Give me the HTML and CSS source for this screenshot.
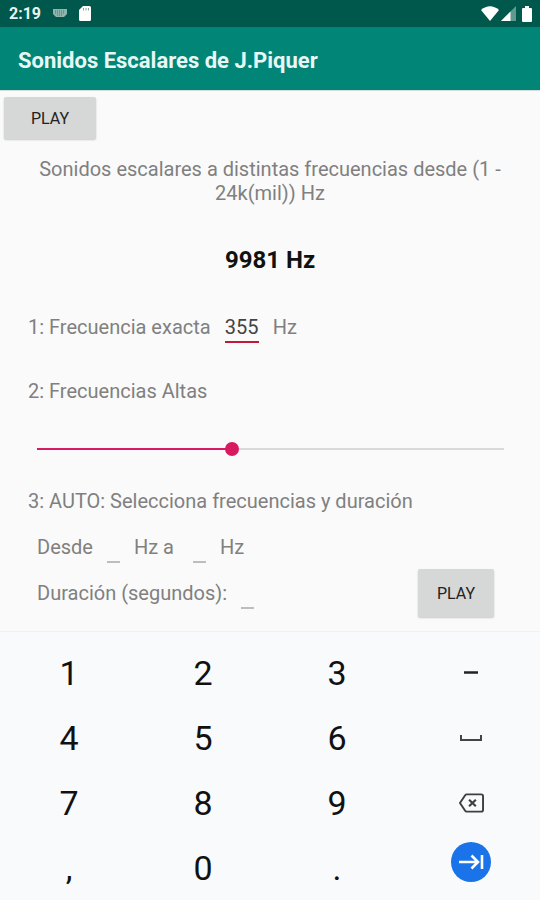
FILE: index.html
```html
<!DOCTYPE html>
<html lang="es">
<head>
    <meta charset="UTF-8">
    <meta name="viewport" content="width=device-width, initial-scale=1.0">
    <title>Sonidos Escalares</title>
    <link rel="stylesheet" href="styles.css">
</head>
<body>
    <div class="status-bar">
        <span class="clock">2:19</span>
        <svg class="status-keyboard" width="14" height="9" viewBox="0 0 14 9">
            <path d="M0 0h14v5l-3 3H3L0 5z" fill="#8fb5ae"/>
            <path d="M2 2h10M2 4h10M4 6h6" stroke="#3d7a71" stroke-width="1" stroke-dasharray="1 1"/>
        </svg>
        <svg width="12" height="15" viewBox="0 0 12 15">
            <path d="M4 0h6.500q1.500 0 1.500 1.500v12q0 1.500-1.500 1.500h-9Q0 15 0 13.500V4z" fill="#fff"/>
            <path d="M4.500 2v2.500M7 2v2.500M9.500 2v2.500" stroke="#7fa9a3" stroke-width="1"/>
        </svg>
        <div class="status-right">
            <svg width="18" height="15" viewBox="0 0 18 15">
                <path d="M0 4Q9-3.500 18 4L9 15z" fill="#fff"/>
            </svg>
            <svg width="15" height="15" viewBox="0 0 15 15">
                <path d="M15 0v15H0z" fill="#5f9a91"/>
                <path d="M9.500 5.500V15H0z" fill="#fff"/>
            </svg>
            <svg class="battery" width="10" height="16" viewBox="0 0 10 16">
                <path d="M3 0h4v2h2q1 0 1 1v12q0 1-1 1H1q-1 0-1-1V3q0-1 1-1h2z" fill="#fff"/>
            </svg>
        </div>
    </div>
    <header class="app-bar">
        <h1>Sonidos Escalares de J.Piquer</h1>
    </header>

    <main>
        <button class="btn btn-main">PLAY</button>
        <p class="intro">Sonidos escalares a distintas frecuencias desde (1 - 24k(mil)) Hz</p>
        <p class="current">9981 Hz</p>

        <div class="row exact">
            <label for="exact">1: Frecuencia exacta</label>
            <input class="field field-active" type="text" id="exact" value="355">
            <span>Hz</span>
        </div>

        <label class="high" for="high">2: Frecuencias Altas</label>
        <input class="slider" type="range" id="high" min="1" max="24000" value="9981">

        <h2>3: AUTO: Selecciona frecuencias y duración</h2>
        <div class="auto">
            <div class="auto-fields">
                <div class="row">
                    <label for="from">Desde</label>
                    <input class="field field-empty" type="text" id="from">
                    <label for="to">Hz a&nbsp;</label>
                    <input class="field field-empty" type="text" id="to">
                    <span>Hz</span>
                </div>
                <div class="row">
                    <label for="seconds">Duración (segundos):</label>
                    <input class="field field-empty" type="text" id="seconds">
                </div>
            </div>
            <button class="btn btn-auto">PLAY</button>
        </div>
    </main>

    <div class="keyboard">
        <button class="key">1</button>
        <button class="key">2</button>
        <button class="key">3</button>
        <button class="key" aria-label="Menos">
            <svg width="14" height="3" viewBox="0 0 14 3"><path d="M0 1.500h14" stroke="#222" stroke-width="2.500"/></svg>
        </button>
        <button class="key">4</button>
        <button class="key">5</button>
        <button class="key">6</button>
        <button class="key" aria-label="Espacio">
            <svg width="22" height="6" viewBox="0 0 22 6"><path d="M1 0v5h20V0" fill="none" stroke="#444" stroke-width="2"/></svg>
        </button>
        <button class="key">7</button>
        <button class="key">8</button>
        <button class="key">9</button>
        <button class="key" aria-label="Borrar">
            <svg width="25" height="20" viewBox="0 0 26 20" fill="none" stroke="#3c4043" stroke-width="2">
                <path d="M8 1h15q2 0 2 2v14q0 2-2 2H8q-1 0-1.600-1L1 10l5.400-8Q7 1 8 1z"/>
                <path d="M10.500 6.500l7 7M17.500 6.500l-7 7" stroke-width="2.200"/>
            </svg>
        </button>
        <button class="key">,</button>
        <button class="key">0</button>
        <button class="key">.</button>
        <button class="key key-next" aria-label="Siguiente">
            <svg width="40" height="40" viewBox="0 0 40 40">
                <circle cx="20" cy="20" r="20" fill="#1a73e8"/>
                <path d="M8 20h18M20.500 13.500l6.500 6.500-6.500 6.500M31 13v14" fill="none" stroke="#fff" stroke-width="2.600"/>
            </svg>
        </button>
    </div>
</body>
</html>
```
FILE: styles.css
```css
* {
    box-sizing: border-box;
}

body {
    margin: 0;
    font-family: Roboto, "Liberation Sans", sans-serif;
    font-size: 20px;
    line-height: 24px;
    color: #808080;
    background-color: #fafafa;
}

button,
input {
    font-family: inherit;
    border: none;
    padding: 0;
    margin: 0;
}

h1,
h2,
p {
    margin: 0;
}

.status-bar {
    display: flex;
    align-items: center;
    height: 27px;
    padding: 0 8px 0 9px;
    background-color: #00574b;
}

.clock {
    font-size: 16px;
    font-weight: 700;
    color: #e8f3f1;
}

.status-keyboard {
    margin: 0 12px;
}

.status-right {
    display: flex;
    align-items: center;
    gap: 2px;
    margin-left: auto;
}

.battery {
    margin-left: 4px;
}

.app-bar {
    padding: 22px 18px 17px;
    background-color: #008577;
    border-bottom: 1px solid #d5dddc;
}

h1 {
    font-size: 22px;
    line-height: 24px;
    font-weight: 700;
    color: #e8f7f5;
}

main {
    padding: 6px 28px 14px;
}

.btn {
    display: block;
    font-size: 16px;
    color: #222;
    background-color: #d6d7d7;
    border-radius: 2px;
    box-shadow: 0 1px 2px rgba(0, 0, 0, 0.2);
}

.btn-main {
    width: 92px;
    height: 42px;
    margin-left: -24px;
}

.intro {
    margin-top: 18px;
    text-align: center;
}

.current {
    margin-top: 41px;
    font-size: 24px;
    line-height: 28px;
    font-weight: 700;
    text-align: center;
    color: #111;
}

.row {
    display: flex;
    align-items: flex-start;
}

.exact {
    margin-top: 41px;
}

.field {
    height: 28px;
    margin: 0 14px;
    padding-bottom: 2px;
    font-size: 20px;
    line-height: 24px;
    background: none;
    outline: none;
}

.field-active {
    width: 34px;
    color: #444;
    border-bottom: 2px solid #c2183c;
}

.field-empty {
    width: 13px;
    border-bottom: 2px solid #bdbdbd;
}

.high {
    display: block;
    margin-top: 36px;
}

.slider {
    display: block;
    appearance: none;
    width: calc(100% - 17px);
    height: 14px;
    margin: 39px 8px 0 9px;
    background: linear-gradient(to right, #d81b60 42%, #d9d9d9 42%) center / 100% 2px no-repeat;
}

.slider::-webkit-slider-thumb {
    appearance: none;
    width: 14px;
    height: 14px;
    border-radius: 50%;
    background-color: #d81b60;
}

h2 {
    margin-top: 33px;
    font-size: 20px;
    line-height: 24px;
    font-weight: 400;
}

.auto {
    display: flex;
    align-items: flex-end;
    justify-content: space-between;
    margin-top: 22px;
    padding: 0 18px 0 9px;
}

.auto-fields {
    display: grid;
    gap: 18px;
    padding-bottom: 8px;
}

.btn-auto {
    width: 76px;
    height: 48px;
}

.keyboard {
    display: grid;
    grid-template-columns: repeat(4, 1fr);
    grid-auto-rows: 65px;
    height: 269px;
    padding: 8px 2px 0;
    overflow: hidden;
    background-color: #f8fafc;
    border-top: 1px solid #eff1f2;
}

.key {
    display: flex;
    align-items: center;
    justify-content: center;
    font-size: 34px;
    color: #111;
    background: none;
}

.key-next {
    align-items: flex-start;
    padding-top: 7px;
}
```
